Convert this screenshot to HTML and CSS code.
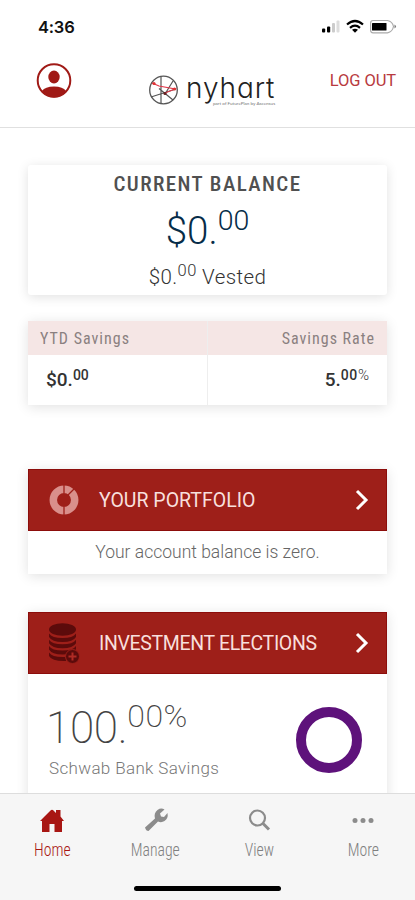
FILE: index.html
```html
<!DOCTYPE html>
<html lang="en">

<head>
    <meta charset="UTF-8">
    <meta name="viewport" content="width=device-width, initial-scale=1.0">
    <title>Nyhart</title>
    <link rel="stylesheet" href="styles.css">
</head>

<body>
    <div id="main">
        <div class="status">
            <span class="time">4:36</span>
            <svg class="signals" width="76" height="16" viewBox="0 0 76 16">
                <rect x="1" y="9.5" width="3.200" height="4" rx="1" />
                <rect x="6" y="7.5" width="3.200" height="6" rx="1" />
                <rect x="11" y="4" width="3" height="9.500" rx="1" fill="#ccc" />
                <rect x="15.500" y="1.500" width="3" height="12" rx="1" fill="#ddd" />
                <g fill="none" stroke="#000" stroke-width="2.200">
                    <path d="M26 5.500Q34 -1.500 42 5.500" />
                    <path d="M29 8.800Q34 4.500 39 8.800" />
                </g>
                <path d="M31 10.800Q34 8.800 37 10.800L34 13.800Z" />
                <path d="M52 1.500H66.500Q71.500 2.500 72.500 7.500Q71.500 12.800 66.500 13.800H52Q49.600 13.800 49.600 11.300V4Q49.600 1.500 52 1.500Z" fill="#fff" stroke="#aaa" stroke-width="1.200" />
                <rect x="51" y="4" width="14.500" height="7.500" rx="0.500" />
                <path d="M73.500 5.500Q76.500 7.500 73.500 9.500Z" fill="#777" />
            </svg>
        </div>

        <div class="header">
            <svg class="user" width="36" height="36" viewBox="0 0 36 36">
                <circle cx="18" cy="17.500" r="16.300" fill="#fff" stroke="#a01a16" stroke-width="2" />
                <ellipse cx="18" cy="14" rx="5.700" ry="6.500" fill="#a01a16" />
                <path d="M6 28Q9 23.500 18 23.500T30 28Q25.500 34.500 18 34.500T6 28Z" fill="#a01a16" />
            </svg>
            <div class="logo">
                <svg width="30" height="30" viewBox="0 0 30 30" fill="none" stroke="#555">
                    <circle cx="15.500" cy="15" r="13.800" stroke-width="1.300" />
                    <path d="M13 1.500V28.500M28 14L3 22M11 13.500L25 25M17 19L25 6" stroke-width="1.200" />
                    <path d="M4 8L11 11L27 14L17 18" stroke="#e0384a" stroke-width="1.200" />
                    <circle cx="6" cy="8.500" r="1.600" fill="#d33" stroke="none" />
                    <circle cx="26.500" cy="14" r="1.600" fill="#d33" stroke="none" />
                    <circle cx="17" cy="18.500" r="1.600" fill="#622" stroke="none" />
                </svg>
                <div class="brand">
                    <span class="name">nyhart</span>
                    <span class="tagline">part of FuturePlan by Ascensus</span>
                </div>
            </div>
            <span class="logout">LOG OUT</span>
        </div>

        <div class="content">
            <div class="card balance">
                <h3>CURRENT BALANCE</h3>
                <div class="amount">$0.<sup>00</sup></div>
                <div class="vested">$0.<sup>00</sup> Vested</div>
            </div>

            <div class="card savings">
                <div class="col">
                    <div class="label">YTD Savings</div>
                    <div class="value">$0.<sup>00</sup></div>
                </div>
                <div class="col right">
                    <div class="label">Savings Rate</div>
                    <div class="value">5.<sup>00<small>%</small></sup></div>
                </div>
            </div>

            <div class="card portfolio">
                <div class="bar">
                    <svg class="icon" width="34" height="42" viewBox="0 0 34 42">
                        <circle cx="18" cy="21" r="10.700" fill="none" stroke="#d98f8b" stroke-width="7.500" />
                        <path d="M18 5V14M18 28V37M21 17L29 9" stroke="#9e1f19" stroke-width="1.300" />
                    </svg>
                    <span class="title">YOUR PORTFOLIO</span>
                    <svg class="arrow" width="16" height="24" viewBox="0 0 16 24">
                        <path d="M3 3L12 12L3 21" />
                    </svg>
                </div>
                <div class="message">Your account balance is zero.</div>
            </div>

            <div class="card elections">
                <div class="bar">
                    <svg class="icon" width="34" height="42" viewBox="0 0 34 42">
                        <g fill="#5c0b0b">
                            <ellipse cx="16.500" cy="7.500" rx="13.500" ry="6.200" />
                            <path id="coin" d="M3 11.500Q6 16 16.500 16T30 11.500V15Q27 20 16.500 20T3 15Z" />
                            <use href="#coin" y="6.300" />
                            <use href="#coin" y="12.600" />
                            <path d="M3 30.500Q6 35 16.500 35H20V39Q6 39.500 3 34Z" />
                        </g>
                        <circle cx="26.500" cy="34.500" r="7" fill="#5c0b0b" stroke="#9e1f19" />
                        <path d="M26.500 30.500V38.500M22.500 34.500H30.500" stroke="#b02b25" stroke-width="2" />
                    </svg>
                    <span class="title tight">INVESTMENT ELECTIONS</span>
                    <svg class="arrow" width="16" height="24" viewBox="0 0 16 24">
                        <path d="M3 3L12 12L3 21" />
                    </svg>
                </div>
                <div class="fund">
                    <div>
                        <div class="percent">100.<sup>00%</sup></div>
                        <div class="fundName">Schwab Bank Savings</div>
                    </div>
                    <div class="ring"></div>
                </div>
            </div>
        </div>

        <div class="tabs">
            <div class="tab active">
                <svg width="26" height="26" viewBox="0 0 26 26" fill="#a81613">
                    <path d="M1 14L11.500 3.500Q13 2 14.500 3.500L17 6V3H21.500V9.500L25 14H23V25H15.500V17H10.500V25H3V14Z" />
                </svg>
                <span>Home</span>
            </div>
            <div class="tab">
                <svg width="26" height="26" viewBox="0 0 26 26" fill="#8c8c8c">
                    <path d="M2 20.500L12 11.500Q10.500 6 14.500 3Q18 0.500 21.500 2.500L17 6.500L18 9.500L21 10L24.500 6Q25.500 11.500 21.500 14Q18.500 16 15 14.500L5.500 24Q3 24 2 20.500Z" />
                </svg>
                <span>Manage</span>
            </div>
            <div class="tab">
                <svg width="26" height="26" viewBox="0 0 26 26" fill="none" stroke="#8c8c8c">
                    <circle cx="11.500" cy="11" r="7.500" stroke-width="2.200" />
                    <path d="M17 16.500L23 22.500" stroke-width="3" />
                </svg>
                <span>View</span>
            </div>
            <div class="tab">
                <svg width="26" height="26" viewBox="0 0 26 26" fill="#8c8c8c">
                    <circle cx="5" cy="13.500" r="2.500" />
                    <circle cx="13" cy="13.500" r="2.500" />
                    <circle cx="21" cy="13.500" r="2.500" />
                </svg>
                <span>More</span>
            </div>
        </div>
        <div class="indicator"></div>
    </div>
</body>

</html>
```
FILE: styles.css
```css
* {
    box-sizing: border-box;
}

body {
    margin: 0;
    background: #fff;
    font-family: Roboto, "Liberation Sans", sans-serif;
    color: #444;
}

#main {
    width: 415px;
    height: 900px;
    overflow: hidden;
    display: flex;
    flex-direction: column;
}

svg {
    display: block;
    flex-shrink: 0;
}

sup {
    line-height: 0;
    vertical-align: baseline;
    position: relative;
}

.status {
    height: 54px;
    padding: 17px 18px 0 38px;
    display: flex;
    justify-content: space-between;
}

.time {
    font: 600 16.5px/20px Inter, sans-serif;
    letter-spacing: -0.2px;
    color: #111;
}

.signals {
    margin-top: 2px;
}

.header {
    height: 74px;
    border-bottom: 1px solid #e0e0e0;
    padding: 9px 19px 0 36px;
    display: flex;
}

.logo {
    display: flex;
    margin: 12px 0 0 76px;
}

.brand {
    margin-left: 8px;
    width: 91px;
}

.name {
    display: block;
    font: 300 28px/26px Inter, sans-serif;
    font-feature-settings: "cv11";
    letter-spacing: 0.9px;
    color: #222;
    height: 26px;
}

.tagline {
    display: block;
    font: 4.600px/5px Lato, sans-serif;
    color: #777;
    margin-left: 27px;
    white-space: nowrap;
}

.logout {
    margin-left: auto;
    margin-top: 8px;
    font-size: 16.5px;
    line-height: 20px;
    letter-spacing: -0.1px;
    color: #b83a40;
    white-space: nowrap;
}

.content {
    flex: 1;
    min-height: 0;
    overflow: hidden;
    padding: 37px 28px 0;
}

.card {
    background: #fff;
    box-shadow: 0 2px 12px rgba(0, 0, 0, 0.12);
}

.balance {
    height: 130px;
    padding-top: 9px;
    border-radius: 3px;
    text-align: center;
}

.balance h3 {
    margin: 0;
    font-size: 21px;
    line-height: 20px;
    font-weight: 500;
    font-stretch: 75%;
    letter-spacing: 1.4px;
    color: #505050;
}

.amount {
    font-size: 38.5px;
    line-height: 44px;
    height: 60px;
    padding-top: 15px;
    font-weight: 300;
    color: #062c48;
}

.amount sup {
    font-size: 28.5px;
    top: -14px;
}

.vested {
    font-size: 20.5px;
    line-height: 46px;
    font-weight: 300;
    letter-spacing: 0.4px;
    color: #333;
}

.vested sup {
    font-size: 16.5px;
    top: -8px;
}

.savings {
    height: 84px;
    margin-top: 26px;
    display: flex;
}

.col {
    width: 50%;
    border-right: 1px solid #eee;
}

.col.right {
    border-right: 0;
    text-align: right;
}

.label {
    height: 34px;
    padding: 0 12px;
    background: #f5e6e5;
    font-size: 16px;
    line-height: 35px;
    font-stretch: 75%;
    letter-spacing: 1px;
    color: #8a8080;
}

.value {
    padding: 0 18px;
    font-size: 19px;
    line-height: 50px;
    font-weight: 500;
    color: #333;
}

.value sup {
    font-size: 14px;
    top: -6px;
}

.right .value sup {
    letter-spacing: 0.6px;
}

.value small {
    font-size: 15px;
    font-weight: 300;
    letter-spacing: 0;
}

.portfolio {
    height: 105px;
    margin-top: 64px;
}

.bar {
    height: 62px;
    background: #9e1f19;
    border: 1px solid #8c0d0b;
    display: flex;
    align-items: center;
    padding: 0 16px 0 17px;
}

.title {
    margin-left: 19px;
    font-size: 19.5px;
    color: #f8dfdd;
}

.title.tight {
    letter-spacing: -0.35px;
}

.arrow {
    margin-left: auto;
    fill: none;
    stroke: #fff;
    stroke-width: 3;
}

.message {
    text-align: center;
    font-size: 17.5px;
    line-height: 43px;
    font-weight: 300;
    color: #666;
}

.elections {
    height: 230px;
    margin-top: 38px;
}

.fund {
    display: flex;
    justify-content: space-between;
    padding: 27px 25px 0 18px;
}

.percent {
    font-size: 44px;
    line-height: 54px;
    font-weight: 200;
    letter-spacing: -0.3px;
    color: #444;
}

.percent sup {
    font-size: 32px;
    top: -16px;
    letter-spacing: 0.5px;
}

.fundName {
    margin: 3px 0 0 3px;
    font-size: 17px;
    line-height: 20px;
    font-weight: 300;
    letter-spacing: 0.35px;
    color: #777;
}

.ring {
    width: 66px;
    height: 66px;
    margin-top: 6px;
    border: 10px solid #5e127b;
    border-radius: 50%;
}

.tabs {
    height: 83px;
    border-top: 1px solid #ddd;
    background: #f6f6f6;
    display: flex;
}

.tab {
    width: 103.75px;
    padding-top: 13px;
    display: flex;
    flex-direction: column;
    align-items: center;
    font-size: 17.5px;
    line-height: 20px;
    font-weight: 300;
    font-stretch: 75%;
    color: #808080;
}

.tab span {
    margin-top: 7px;
    transform: scaleX(0.9);
}

.tab.active {
    color: #a81613;
}

.indicator {
    height: 24px;
    background: #f6f6f6;
    padding: 10px 134px;
}

.indicator::before {
    content: "";
    display: block;
    height: 5px;
    border-radius: 3px;
    background: #000;
}
```
